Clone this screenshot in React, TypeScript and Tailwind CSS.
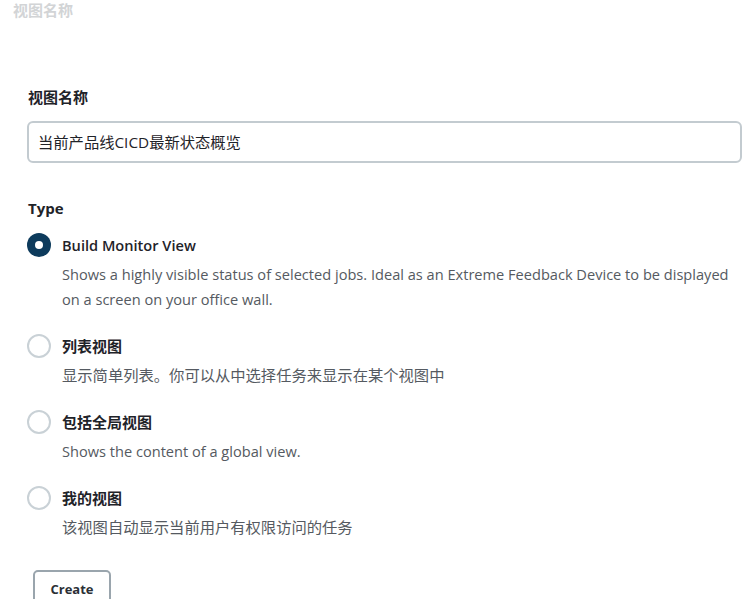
import React from "react";

const font = { fontFamily: '"Open Sans", "Noto Sans CJK SC", sans-serif' };

function Radio({ checked }: { checked?: boolean }) {
  return checked ? (
    <span className="flex h-[24px] w-[24px] shrink-0 items-center justify-center rounded-full bg-[#0d3b5c]">
      <span className="h-[8px] w-[8px] rounded-full bg-white" />
    </span>
  ) : (
    <span className="h-[24px] w-[24px] shrink-0 rounded-full border-2 border-[#c9d1d6] bg-white" />
  );
}

function Option({
  title,
  desc,
  checked,
  cjk,
  cjkDesc,
}: {
  title: string;
  desc: React.ReactNode;
  checked?: boolean;
  cjk?: boolean;
  cjkDesc?: boolean;
}) {
  return (
    <div className="flex flex-col">
      <div className="flex items-center gap-[11px]">
        <Radio checked={checked} />
        <span
          className={
            cjk
              ? "text-[15px] font-bold leading-[24px] text-[#1f2329]"
              : "text-[14.6px] font-semibold leading-[24px] text-[#1f2329]"
          }
        >
          {title}
        </span>
      </div>
      <div
        className={
          cjkDesc
            ? "ml-[35px] mt-[5px] whitespace-nowrap text-[15.3px] leading-[25px] text-[#555a61]"
            : "ml-[35px] mt-[5px] whitespace-nowrap text-[14.6px] leading-[25px] text-[#555a61]"
        }
      >
        {desc}
      </div>
    </div>
  );
}

export default function App() {
  return (
    <div className="h-[599px] w-[755px] overflow-hidden bg-white" style={font}>
      <div className="px-[13px] pt-px text-[15px] font-bold leading-[18px] text-[#d2d4d6]">视图名称</div>
      <div className="px-[27px] pt-[69px]">
        <div className="pl-px text-[15px] font-bold leading-[18px] text-[#1f2329]">视图名称</div>
        <div className="mt-[15px] flex h-[42px] w-[715px] items-center rounded-[6px] border-2 border-[#c3cbd0] px-[9px] text-[15.3px] text-[#1f2329]">
          当前产品线CICD最新状态概览
        </div>
        <div className="mt-[36px] pl-px text-[15px] font-bold leading-[18px] text-[#1f2329]">Type</div>
        <div className="mt-[16px] flex flex-col gap-[22px]">
          <Option
            checked
            title="Build Monitor View"
            desc={
              <>
                Shows a highly visible status of selected jobs. Ideal as an Extreme Feedback Device to be displayed
                <br />
                on a screen on your office wall.
              </>
            }
          />
          <Option cjk cjkDesc title="列表视图" desc="显示简单列表。你可以从中选择任务来显示在某个视图中" />
          <Option cjk title="包括全局视图" desc="Shows the content of a global view." />
          <Option cjk cjkDesc title="我的视图" desc="该视图自动显示当前用户有权限访问的任务" />
        </div>
        <button className="ml-[6px] mt-[30px] flex h-[40px] w-[78px] items-center justify-center rounded-[5px] border-2 border-[#9aa5ad] bg-white text-[13px] font-bold text-[#2b3036]">
          Create
        </button>
      </div>
    </div>
  );
}
